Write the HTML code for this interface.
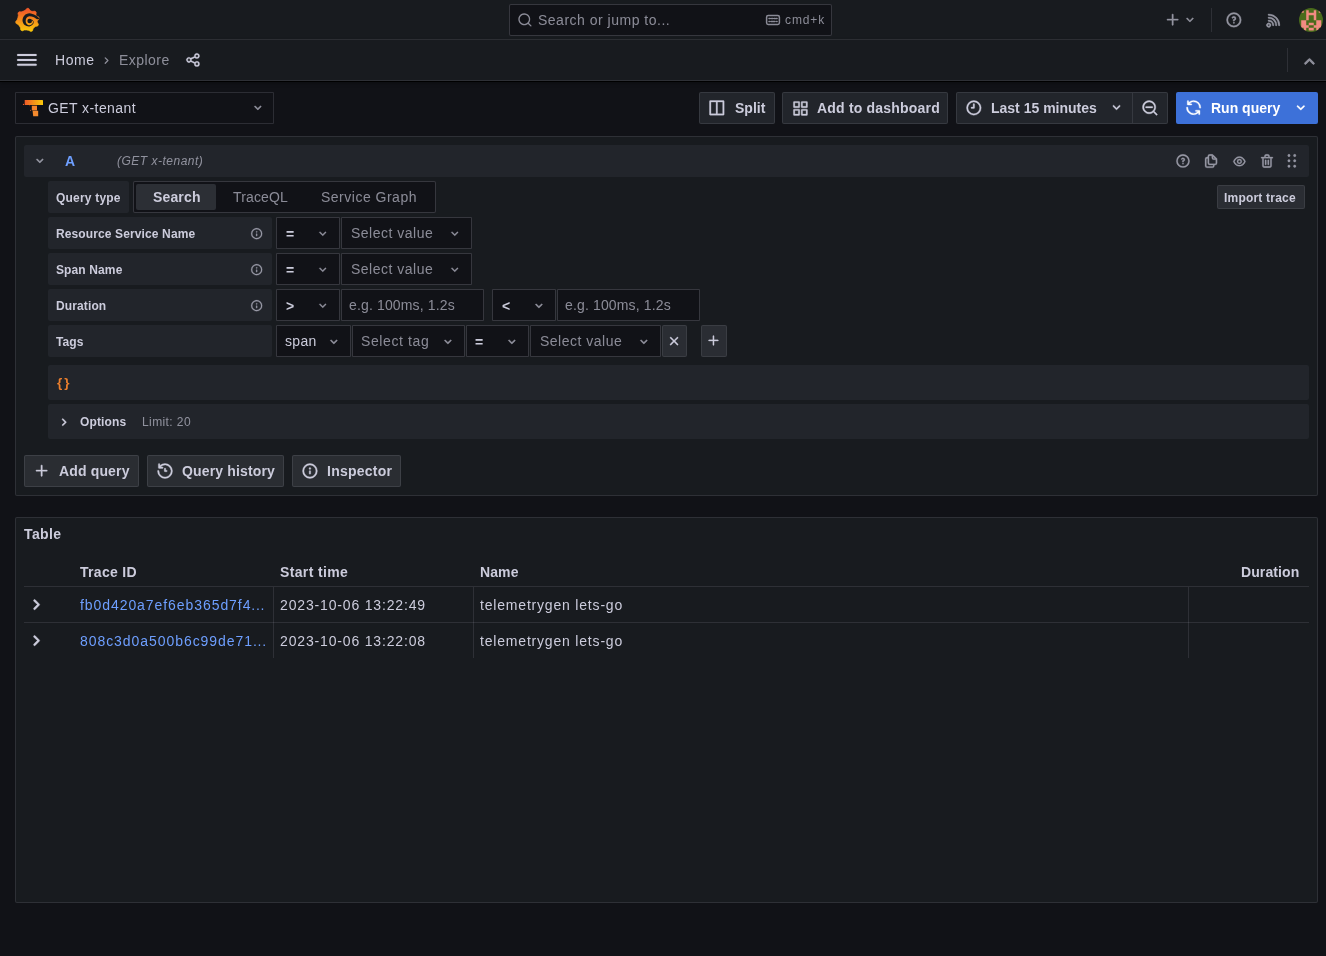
<!DOCTYPE html>
<html><head><meta charset="utf-8">
<style>
*{box-sizing:border-box;margin:0;padding:0}
html,body{width:1326px;height:956px;overflow:hidden;background:#111217;font-family:"Liberation Sans",sans-serif;color:#ccccdc;font-size:14px}
.abs{position:absolute}
svg{position:absolute;display:block;overflow:visible}
.topbar{position:absolute;left:0;top:0;width:1326px;height:40px;background:#181b1f;border-bottom:1px solid rgba(204,204,220,0.12)}
.crumbbar{position:absolute;left:0;top:40px;width:1326px;height:41px;background:#181b1f;border-bottom:1px solid rgba(204,204,220,0.12);box-shadow:0 1px 0 #000,0 2px 4px rgba(0,0,0,0.35)}
.search{position:absolute;left:509px;top:4px;width:323px;height:32px;background:#111217;border:1px solid rgba(204,204,220,0.2);border-radius:2px}
.btn{position:absolute;height:32px;border:1px solid rgba(204,204,220,0.12);background:#22252b;border-radius:2px}
.t{will-change:transform;position:absolute;white-space:nowrap;line-height:14px;height:14px;font-size:14px;letter-spacing:0.35px}
.t12{will-change:transform;position:absolute;white-space:nowrap;line-height:12px;height:12px;font-size:12px;letter-spacing:0.3px}
.b{font-weight:bold;letter-spacing:0.15px}
.sec{color:rgba(204,204,220,0.65)}
.panel{position:absolute;left:15px;width:1303px;background:#181b1f;border:1px solid rgba(204,204,220,0.12);border-radius:2px}
.lbl{position:absolute;left:48px;width:224px;height:32px;background:#22252b;border-radius:2px}
.sel{position:absolute;height:32px;background:#111217;border:1px solid rgba(204,204,220,0.2);border-radius:1px}
.ic{stroke:currentColor;fill:none;stroke-width:1.5;stroke-linecap:round;stroke-linejoin:round}
</style></head><body>

<!-- TOP BAR -->
<div class="topbar"></div>
<svg style="left:16px;top:8px" width="24" height="24" viewBox="0 0 24 24">
  <defs><linearGradient id="gl" x1="0" y1="0" x2="0" y2="1"><stop offset="0.1" stop-color="#f05a28"/><stop offset="1" stop-color="#fbca0a"/></linearGradient></defs>
  <path fill="url(#gl)" stroke="url(#gl)" stroke-width="0.6" stroke-linejoin="round" d="M7.45 3.12 L9.43 2.09 L10.98 0.31 L12.64 0.37 L14.07 2.25 L15.27 3.09 L16.70 3.37 L19.05 3.08 L20.24 4.24 L20.04 6.59 L20.10 7.48 L20.81 8.01 L22.89 9.12 L23.21 10.75 L21.69 12.56 L21.23 13.41 L21.47 14.34 L22.51 16.46 L21.81 17.97 L19.52 18.54 L18.15 19.44 L17.16 20.74 L16.43 22.99 L14.88 23.58 L12.83 22.40 L10.62 22.07 L8.39 22.05 L6.18 22.90 L4.75 22.07 L4.38 19.73 L3.34 17.95 L1.99 16.39 L-0.09 15.28 L-0.41 13.65 L1.11 11.84 L1.84 9.64 L2.31 7.36 L1.90 5.04 L2.99 3.79 L5.35 3.87Z"/>
  <path d="M24.09 10.90 C23.32 10.30 21.23 8.25 19.45 7.32 C17.67 6.39 15.23 5.28 13.40 5.30 C11.57 5.32 9.60 6.27 8.45 7.45 C7.30 8.63 6.45 10.80 6.50 12.40 C6.55 14.00 7.58 16.05 8.73 17.07 C9.88 18.08 12.01 18.66 13.40 18.50 C14.79 18.34 16.38 16.91 17.08 16.08 C17.77 15.25 17.70 14.25 17.55 13.51 C17.41 12.78 16.43 11.96 16.20 11.65 L14.95 11.99 C15.27 12.21 16.62 12.74 16.88 13.33 C17.14 13.92 17.09 14.85 16.51 15.51 C15.93 16.17 14.43 17.31 13.40 17.30 C12.37 17.29 10.98 16.26 10.36 15.44 C9.74 14.62 9.65 13.37 9.70 12.40 C9.75 11.43 10.03 10.33 10.64 9.64 C11.26 8.95 12.28 8.35 13.40 8.25 C14.52 8.15 16.13 8.54 17.38 9.06 C18.64 9.57 20.34 10.96 20.93 11.34Z" fill="#181b1f"/>
  <circle cx="13.7" cy="13" r="2.35" fill="#181b1f"/>
</svg>
<div class="search"></div>
<svg style="left:517.06px;top:12.12px;color:rgba(204,204,220,0.65)" width="15.90" height="15.90" viewBox="0 0 24 24"><path fill="currentColor" stroke="currentColor" stroke-width="0" d="M21.71,20.29,18,16.61A9,9,0,1,0,16.61,18l3.68,3.68a1,1,0,0,0,1.42,0A1,1,0,0,0,21.71,20.29ZM11,18a7,7,0,1,1,7-7A7,7,0,0,1,11,18Z"/></svg>
<div class="t sec" style="left:538px;top:13px;letter-spacing:0.5px">Search or jump to...</div>
<svg style="left:766px;top:15px;color:rgba(204,204,220,0.65)" width="14" height="10" viewBox="0 0 14 10"><rect x="0.6" y="0.6" width="12.8" height="8.8" rx="1.6" class="ic" stroke-width="1.2"/><path d="M3 3.5h1.2M5.5 3.5h1.2M8 3.5h1.2M10.3 3.5h.8M3 6.5h.6M5 6.5h4M10.5 6.5h.6" class="ic" stroke-width="1.1"/></svg>
<div class="t12 sec" style="left:785px;top:14px;letter-spacing:0.9px">cmd+k</div>

<svg style="left:1164.38px;top:11.38px;color:rgba(204,204,220,0.65)" width="17.25" height="17.25" viewBox="0 0 24 24"><path fill="currentColor" stroke="currentColor" stroke-width="0.45" d="M19,11H13V5a1,1,0,0,0-2,0v6H5a1,1,0,0,0,0,2h6v6a1,1,0,0,0,2,0V13h6a1,1,0,0,0,0-2Z"/></svg>
<svg style="left:1182.06px;top:12.23px;color:rgba(204,204,220,0.65)" width="15.84" height="15.84" viewBox="0 0 24 24"><path fill="currentColor" stroke="currentColor" stroke-width="0.45" d="M17,9.17a1,1,0,0,0-1.41,0L12,12.71,8.46,9.17a1,1,0,0,0-1.41,0,1,1,0,0,0,0,1.42l4.24,4.24a1,1,0,0,0,1.420,0L17,10.59A1,1,0,0,0,17,9.17Z"/></svg>
<div class="abs" style="left:1211px;top:8px;width:1px;height:24px;background:rgba(204,204,220,0.12)"></div>
<svg style="left:1225.12px;top:11.02px;color:rgba(204,204,220,0.65)" width="17.76" height="17.76" viewBox="0 0 24 24"><path fill="currentColor" stroke="currentColor" stroke-width="0.45" d="M11.29,15.29a1.58,1.58,0,0,0-.12.15.76.76,0,0,0-.09.18.64.64,0,0,0-.06.18,1.36,1.36,0,0,0,0,.2.84.84,0,0,0,.08.38.9.9,0,0,0,.54.54.94.94,0,0,0,.76,0,.9.9,0,0,0,.54-.54A1,1,0,0,0,13,16a1,1,0,0,0-.29-.71A1,1,0,0,0,11.29,15.29ZM12,2A10,10,0,1,0,22,12,10,10,0,0,0,12,2Zm0,18a8,8,0,1,1,8-8A8,8,0,0,1,12,20ZM12,7A3,3,0,0,0,9.4,8.5a1,1,0,1,0,1.73,1A1,1,0,0,1,12,9a1,1,0,0,1,0,2,1,1,0,0,0-1,1v1a1,1,0,0,0,2,0v-.18A3,3,0,0,0,12,7Z"/></svg>
<svg style="left:1264.84px;top:10.95px;color:rgba(204,204,220,0.65)" width="17.86" height="17.86" viewBox="0 0 24 24"><path fill="currentColor" stroke="currentColor" stroke-width="0.45" d="M2.88,16.88a3,3,0,1,0,4.24,4.24,3,3,0,1,0-4.24-4.24Zm2.83,2.830a1,1,0,0,1-1.42-1.42,1,1,0,0,1,1.420,0A1,1,0,0,1,5.71,19.71ZM5,12a1,1,0,0,0,0,2,5,5,0,0,1,5,5,1,1,0,0,0,2,0,7,7,0,0,0-7-7ZM5,8a1,1,0,0,0,0,2,9,9,0,0,1,9,9,1,1,0,0,0,2,0,11.08,11.08,0,0,0-3.22-7.78A11.08,11.08,0,0,0,5,8Zm10.61.39A14.88,14.88,0,0,0,5,4a1,1,0,0,0,0,2,13,13,0,0,1,13,13,1,1,0,0,0,2,0A14.88,14.88,0,0,0,15.61,8.39Z"/></svg>
<svg style="left:1299px;top:8px" width="24" height="24" viewBox="0 0 24 24">
  <clipPath id="av"><circle cx="12" cy="12" r="12"/></clipPath>
  <g clip-path="url(#av)"><rect width="24" height="24" fill="#4a6b1c"/><path fill="#f28b82" d="M2.20 2.30h2.51v2.51h-2.51zM7.22 2.30h2.51v2.51h-2.51zM14.75 2.30h2.51v2.51h-2.51zM19.77 2.30h2.51v2.51h-2.51zM7.22 4.81h2.51v2.51h-2.51zM9.73 4.81h2.51v2.51h-2.51zM12.24 4.81h2.51v2.51h-2.51zM14.75 4.81h2.51v2.51h-2.51zM7.22 7.32h2.51v2.51h-2.51zM14.75 7.32h2.51v2.51h-2.51zM7.22 9.83h2.51v2.51h-2.51zM14.75 9.83h2.51v2.51h-2.51zM2.20 12.34h2.51v2.51h-2.51zM4.71 12.34h2.51v2.51h-2.51zM17.26 12.34h2.51v2.51h-2.51zM19.77 12.34h2.51v2.51h-2.51zM2.20 14.85h2.51v2.51h-2.51zM4.71 14.85h2.51v2.51h-2.51zM9.73 14.85h2.51v2.51h-2.51zM12.24 14.85h2.51v2.51h-2.51zM17.26 14.85h2.51v2.51h-2.51zM19.77 14.85h2.51v2.51h-2.51zM2.20 17.36h2.51v2.51h-2.51zM4.71 17.36h2.51v2.51h-2.51zM7.22 17.36h2.51v2.51h-2.51zM14.75 17.36h2.51v2.51h-2.51zM17.26 17.36h2.51v2.51h-2.51zM19.77 17.36h2.51v2.51h-2.51zM4.71 19.87h2.51v2.51h-2.51zM9.73 19.87h2.51v2.51h-2.51zM12.24 19.87h2.51v2.51h-2.51zM17.26 19.87h2.51v2.51h-2.51z"/></g>
</svg>

<!-- BREADCRUMB BAR -->
<div class="crumbbar"></div>
<svg style="left:15.10px;top:48.10px;color:#ccccdc" width="23.80" height="23.80" viewBox="0 0 24 24"><path fill="currentColor" stroke="currentColor" stroke-width="0.15" d="M3,8H21a1,1,0,0,0,0-2H3A1,1,0,0,0,3,8Zm18,8H3a1,1,0,0,0,0,2H21a1,1,0,0,0,0-2Zm0-5H3a1,1,0,0,0,0,2H21a1,1,0,0,0,0-2Z"/></svg>
<div class="t" style="left:55px;top:53px;letter-spacing:0.6px">Home</div>
<svg style="left:99.37px;top:53.27px;color:rgba(204,204,220,0.65)" width="15.15" height="15.15" viewBox="0 0 24 24"><path fill="currentColor" stroke="currentColor" stroke-width="0" d="M14.83,11.29,10.59,7.050a1,1,0,0,0-1.42,0,1,1,0,0,0,0,1.41L12.71,12,9.17,15.54a1,1,0,0,0,0,1.41,1,1,0,0,0,.71.3.93.93,0,0,0,.71-.3l4.24-4.24A1,1,0,0,0,14.83,11.29Z"/></svg>
<div class="t sec" style="left:119px;top:53px;letter-spacing:0.45px">Explore</div>
<svg style="left:185.06px;top:52.12px;color:#ccccdc" width="15.88" height="15.88" viewBox="0 0 24 24"><path fill="currentColor" stroke="currentColor" stroke-width="0.45" d="M18,14a4,4,0,0,0-3.08,1.48l-5.1-2.35a3.64,3.640,0,0,0,0-2.26l5.1-2.35A4,4,0,1,0,14,6a4.17,4.17,0,0,0,.07.71L8.79,9.14a4,4,0,1,0,0,5.72l5.28,2.43A4.17,4.17,0,0,0,14,18a4,4,0,1,0,4-4ZM18,4a2,2,0,1,1-2,2A2,2,0,0,1,18,4ZM6,14a2,2,0,1,1,2-2A2,2,0,0,1,6,14Zm12,6a2,2,0,1,1,2-2A2,2,0,0,1,18,20Z"/></svg>
<div class="abs" style="left:1287px;top:48px;width:1px;height:24px;background:rgba(204,204,220,0.12)"></div>
<svg style="left:1297.66px;top:49.77px;color:rgba(204,204,220,0.65)" width="22.86" height="22.86" viewBox="0 0 24 24"><path fill="currentColor" stroke="currentColor" stroke-width="0.45" d="M17,13.41,12.71,9.17a1,1,0,0,0-1.42,0L7.050,13.41a1,1,0,0,0,0,1.42,1,1,0,0,0,1.41,0L12,11.29l3.54,3.54a1,1,0,0,0,.7.29,1,1,0,0,0,.71-.29A1,1,0,0,0,17,13.41Z"/></svg>

<!-- TOOLBAR -->
<div class="sel" style="left:15px;top:92px;width:259px;border-color:rgba(204,204,220,0.15)"></div>
<svg style="left:23px;top:99px" width="20" height="18" viewBox="0 0 20 18">
  <defs><linearGradient id="tg" x1="0" y1="0" x2="1" y2="0"><stop offset="0" stop-color="#f05a28"/><stop offset="1" stop-color="#fbca0a"/></linearGradient></defs>
  <path fill="url(#tg)" d="M1.7 0.9H19.4Q20 0.9 20 1.6V6H1.7Z"/>
  <path fill="#f4832b" d="M8.8 6.7H14V11.4H8.8Z"/>
  <path fill="#f58a2e" d="M9.6 11.8H15.2V17.3H10.2Z"/>
  <circle cx="0.5" cy="5.4" r="0.6" fill="#f05a28"/><circle cx="7.5" cy="11.3" r="0.5" fill="#e8662a"/><circle cx="6.4" cy="6.8" r="0.4" fill="#c8561f"/>
</svg>
<div class="t" style="left:48px;top:101px;letter-spacing:0.42px">GET x-tenant</div>
<svg style="left:250.21px;top:100.02px;color:rgba(204,204,220,0.65)" width="15.65" height="15.65" viewBox="0 0 24 24"><path fill="currentColor" stroke="currentColor" stroke-width="0.45" d="M17,9.17a1,1,0,0,0-1.41,0L12,12.71,8.46,9.17a1,1,0,0,0-1.41,0,1,1,0,0,0,0,1.42l4.24,4.24a1,1,0,0,0,1.420,0L17,10.59A1,1,0,0,0,17,9.17Z"/></svg>

<div class="btn" style="left:699px;top:92px;width:76px"></div>
<svg style="left:708.18px;top:99.08px;color:#ccccdc" width="17.64" height="17.64" viewBox="0 0 24 24"><path fill="currentColor" stroke="currentColor" stroke-width="0.45" d="M21,2H3A1,1,0,0,0,2,3V21a1,1,0,0,0,1,1H21a1,1,0,0,0,1-1V3A1,1,0,0,0,21,2ZM11,20H4V4h7Zm9,0H13V4h7Z"/></svg>
<div class="t b" style="left:735px;top:101px;letter-spacing:0">Split</div>

<div class="btn" style="left:782px;top:92px;width:166px"></div>
<svg style="left:791.54px;top:99.74px;color:#ccccdc" width="16.92" height="16.92" viewBox="0 0 24 24"><path fill="currentColor" stroke="currentColor" stroke-width="0.45" d="M10,13H3a1,1,0,0,0-1,1v7a1,1,0,0,0,1,1h7a1,1,0,0,0,1-1V14A1,1,0,0,0,10,13ZM9,20H4V15H9ZM21,2H14a1,1,0,0,0-1,1v7a1,1,0,0,0,1,1h7a1,1,0,0,0,1-1V3A1,1,0,0,0,21,2ZM20,9H15V4h5Zm1,4H14a1,1,0,0,0-1,1v7a1,1,0,0,0,1,1h7a1,1,0,0,0,1-1V14A1,1,0,0,0,21,13Zm-1,7H15V15h5ZM10,2H3A1,1,0,0,0,2,3v7a1,1,0,0,0,1,1h7a1,1,0,0,0,1-1V3A1,1,0,0,0,10,2ZM9,9H4V4H9Z"/></svg>
<div class="t b" style="left:817px;top:101px;letter-spacing:0.2px">Add to dashboard</div>

<div class="btn" style="left:956px;top:92px;width:212px"></div>
<div class="abs" style="left:1132px;top:93px;width:1px;height:30px;background:rgba(204,204,220,0.12)"></div>
<svg style="left:965.00px;top:98.85px;color:#ccccdc" width="17.70" height="17.70" viewBox="0 0 24 24"><path fill="currentColor" stroke="currentColor" stroke-width="0.45" d="M12,2A10,10,0,1,0,22,12,10.011,10.011,0,0,0,12,2Zm0,18a8,8,0,1,1,8-8A8.009,8.009,0,0,1,12,20ZM12,6a1,1,0,0,0-1,1v4H9a1,1,0,0,0,0,2h3a1,1,0,0,0,1-1V7A1,1,0,0,0,12,6Z"/></svg>
<div class="t b" style="left:991px;top:101px;letter-spacing:0">Last 15 minutes</div>
<svg style="left:1107.62px;top:99.13px;color:#ccccdc" width="17.03" height="17.03" viewBox="0 0 24 24"><path fill="currentColor" stroke="currentColor" stroke-width="0.45" d="M17,9.17a1,1,0,0,0-1.41,0L12,12.71,8.46,9.17a1,1,0,0,0-1.41,0,1,1,0,0,0,0,1.42l4.24,4.24a1,1,0,0,0,1.420,0L17,10.59A1,1,0,0,0,17,9.17Z"/></svg>
<svg style="left:1141.00px;top:98.76px;color:#ccccdc" width="17.82" height="17.82" viewBox="0 0 24 24"><path fill="currentColor" stroke="currentColor" stroke-width="0.45" d="M21.71,20.29,18,16.61A9,9,0,1,0,16.61,18l3.68,3.68a1,1,0,0,0,1.42,0A1,1,0,0,0,21.71,20.29ZM11,18a7,7,0,1,1,7-7A7,7,0,0,1,11,18Zm4-8H7a1,1,0,0,0,0,2h8a1,1,0,0,0,0-2Z"/></svg>

<div class="abs" style="left:1176px;top:92px;width:142px;height:32px;background:#3d71d9;border-radius:2px"></div>
<svg style="left:1185.44px;top:99.29px;color:#fff" width="17.22" height="17.22" viewBox="0 0 24 24"><path fill="currentColor" stroke="currentColor" stroke-width="0.45" d="M19.91,15.51H15.38a1,1,0,0,0,0,2h2.4A8,8,0,0,1,4,12a1,1,0,0,0-2,0,10,10,0,0,0,16.88,7.23V21a1,1,0,0,0,2,0V16.5A1,1,0,0,0,19.91,15.51ZM12,2A10,10,0,0,0,5.12,4.77V3a1,1,0,0,0-2,0V7.5a1,1,0,0,0,1,1h4.5a1,1,0,0,0,0-2H6.22A8,8,0,0,1,20,12a1,1,0,0,0,2,0A10,10,0,0,0,12,2Z"/></svg>
<div class="t b" style="left:1211px;top:101px;color:#fff;letter-spacing:0">Run query</div>
<svg style="left:1292.20px;top:98.81px;color:#fff" width="17.57" height="17.57" viewBox="0 0 24 24"><path fill="currentColor" stroke="currentColor" stroke-width="0.45" d="M17,9.17a1,1,0,0,0-1.41,0L12,12.71,8.46,9.17a1,1,0,0,0-1.41,0,1,1,0,0,0,0,1.42l4.24,4.24a1,1,0,0,0,1.420,0L17,10.59A1,1,0,0,0,17,9.17Z"/></svg>

<!-- QUERY PANEL -->
<div class="panel" style="top:136px;height:360px"></div>
<div class="abs" style="left:24px;top:145px;width:1285px;height:32px;background:#22252b;border-radius:2px"></div>
<svg style="left:32.21px;top:153.32px;color:rgba(204,204,220,0.65)" width="15.65" height="15.65" viewBox="0 0 24 24"><path fill="currentColor" stroke="currentColor" stroke-width="0.45" d="M17,9.17a1,1,0,0,0-1.41,0L12,12.71,8.46,9.17a1,1,0,0,0-1.41,0,1,1,0,0,0,0,1.42l4.24,4.24a1,1,0,0,0,1.420,0L17,10.59A1,1,0,0,0,17,9.17Z"/></svg>
<div class="t b" style="left:65px;top:154px;color:#6e9fff">A</div>
<div class="t12 sec" style="left:117px;top:155px;font-style:italic;letter-spacing:0.5px">(GET x-tenant)</div>
<svg style="left:1175.02px;top:153.12px;color:rgba(204,204,220,0.65)" width="15.96" height="15.96" viewBox="0 0 24 24"><path fill="currentColor" stroke="currentColor" stroke-width="0.45" d="M11.29,15.29a1.58,1.58,0,0,0-.12.15.76.76,0,0,0-.09.18.64.64,0,0,0-.06.18,1.36,1.36,0,0,0,0,.2.84.84,0,0,0,.08.38.9.9,0,0,0,.54.54.94.94,0,0,0,.76,0,.9.9,0,0,0,.54-.54A1,1,0,0,0,13,16a1,1,0,0,0-.29-.71A1,1,0,0,0,11.29,15.29ZM12,2A10,10,0,1,0,22,12,10,10,0,0,0,12,2Zm0,18a8,8,0,1,1,8-8A8,8,0,0,1,12,20ZM12,7A3,3,0,0,0,9.4,8.5a1,1,0,1,0,1.73,1A1,1,0,0,1,12,9a1,1,0,0,1,0,2,1,1,0,0,0-1,1v1a1,1,0,0,0,2,0v-.18A3,3,0,0,0,12,7Z"/></svg>
<svg style="left:1202.92px;top:152.82px;color:rgba(204,204,220,0.65)" width="16.17" height="16.17" viewBox="0 0 24 24"><path fill="currentColor" stroke="currentColor" stroke-width="0.45" d="M21,8.94a1.31,1.31,0,0,0-.06-.27l0-.09a1.07,1.07,0,0,0-.19-.28h0l-6-6h0a1.07,1.07,0,0,0-.28-.19.32.32,0,0,0-.09,0A.88.88,0,0,0,14.05,2H10A3,3,0,0,0,7,5V6H6A3,3,0,0,0,3,9V19a3,3,0,0,0,3,3h8a3,3,0,0,0,3-3V18h1a3,3,0,0,0,3-3V9S21,9,21,8.94ZM15,5.41,17.59,8H16a1,1,0,0,1-1-1ZM15,19a1,1,0,0,1-1,1H6a1,1,0,0,1-1-1V9A1,1,0,0,1,6,8H7v7a3,3,0,0,0,3,3h5Zm4-4a1,1,0,0,1-1,1H10a1,1,0,0,1-1-1V5a1,1,0,0,1,1-1h3V7a3,3,0,0,0,3,3h3Z"/></svg>
<svg style="left:1231.74px;top:153.74px;color:rgba(204,204,220,0.65)" width="14.82" height="14.82" viewBox="0 0 24 24"><path fill="currentColor" stroke="currentColor" stroke-width="0.45" d="M21.92,11.6C19.9,6.91,16.1,4,12,4S4.1,6.91,2.08,11.6a1,1,0,0,0,0,.8C4.1,17.09,7.9,20,12,20s7.9-2.91,9.92-7.6A1,1,0,0,0,21.92,11.6ZM12,18c-3.17,0-6.17-2.29-7.9-6C5.83,8.290,8.83,6,12,6s6.17,2.29,7.9,6C18.17,15.71,15.17,18,12,18ZM12,8a4,4,0,1,0,4,4A4,4,0,0,0,12,8Zm0,6a2,2,0,1,1,2-2A2,2,0,0,1,12,14Z"/></svg>
<svg style="left:1258.87px;top:152.92px;color:rgba(204,204,220,0.65)" width="15.97" height="15.97" viewBox="0 0 24 24"><path fill="currentColor" stroke="currentColor" stroke-width="0.45" d="M10,18a1,1,0,0,0,1-1V11a1,1,0,0,0-2,0v6A1,1,0,0,0,10,18ZM20,6H16V5a3,3,0,0,0-3-3H11A3,3,0,0,0,8,5V6H4A1,1,0,0,0,4,8H5V19a3,3,0,0,0,3,3h8a3,3,0,0,0,3-3V8h1a1,1,0,0,0,0-2ZM10,5a1,1,0,0,1,1-1h2a1,1,0,0,1,1,1V6H10Zm7,14a1,1,0,0,1-1,1H8a1,1,0,0,1-1-1V8H17Zm-3-1a1,1,0,0,0,1-1V11a1,1,0,0,0-2,0v6A1,1,0,0,0,14,18Z"/></svg>
<svg style="left:1282.22px;top:151.27px;color:rgba(204,204,220,0.65)" width="19.67" height="19.67" viewBox="0 0 24 24"><path fill="currentColor" stroke="currentColor" stroke-width="0.45" d="M8.5 7a1.5 1.5 0 1 0 0-3 1.5 1.5 0 0 0 0 3zm0 6.5a1.5 1.5 0 1 0 0-3 1.5 1.5 0 0 0 0 3zm1.5 5a1.5 1.5 0 1 1-3 0 1.5 1.5 0 0 1 3 0zM15.5 7a1.5 1.5 0 1 0 0-3 1.5 1.5 0 0 0 0 3zm1.5 5a1.5 1.5 0 1 1-3 0 1.5 1.5 0 0 1 3 0zm-1.5 8a1.5 1.5 0 1 0 0-3 1.5 1.5 0 0 0 0 3z"/></svg>

<div class="abs" style="left:1217px;top:185px;width:88px;height:24px;background:#2a2d33;border:1px solid rgba(204,204,220,0.1);border-radius:2px"></div>
<div class="t12 b" style="left:1224px;top:192px;letter-spacing:0.2px">Import trace</div>

<!-- Query type -->
<div class="lbl" style="top:181px;width:81px"></div>
<div class="t12 b" style="left:56px;top:192px;letter-spacing:0.2px">Query type</div>
<div class="abs" style="left:133px;top:181px;width:303px;height:32px;background:#111217;border:1px solid rgba(204,204,220,0.2);border-radius:2px"></div>
<div class="abs" style="left:136px;top:184px;width:80px;height:26px;background:#2c2f35;border-radius:2px"></div>
<div class="t b" style="left:153px;top:190px">Search</div>
<div class="t sec" style="left:233px;top:190px;letter-spacing:0.15px">TraceQL</div>
<div class="t sec" style="left:321px;top:190px;letter-spacing:0.5px">Service Graph</div>

<!-- Rows -->
<div class="lbl" style="top:217px"></div>
<div class="t12 b" style="left:56px;top:228px;letter-spacing:0.12px">Resource Service Name</div>
<div class="lbl" style="top:253px"></div>
<div class="t12 b" style="left:56px;top:264px;letter-spacing:0.12px">Span Name</div>
<div class="lbl" style="top:289px"></div>
<div class="t12 b" style="left:56px;top:300px;letter-spacing:0.12px">Duration</div>
<div class="lbl" style="top:325px"></div>
<div class="t12 b" style="left:56px;top:336px;letter-spacing:0.12px">Tags</div>

<svg style="left:250.34px;top:226.74px;color:rgba(204,204,220,0.65)" width="13.32" height="13.32" viewBox="0 0 24 24"><path fill="currentColor" stroke="currentColor" stroke-width="0.45" d="M12,2A10,10,0,1,0,22,12,10,10,0,0,0,12,2Zm0,18a8,8,0,1,1,8-8A8,8,0,0,1,12,20Zm0-8.5a1,1,0,0,0-1,1v3a1,1,0,0,0,2,0v-3A1,1,0,0,0,12,11.5Zm0-4a1.25,1.25,0,1,0,1.25,1.25A1.25,1.25,0,0,0,12,7.5Z"/></svg>
<svg style="left:250.34px;top:262.74px;color:rgba(204,204,220,0.65)" width="13.32" height="13.32" viewBox="0 0 24 24"><path fill="currentColor" stroke="currentColor" stroke-width="0.45" d="M12,2A10,10,0,1,0,22,12,10,10,0,0,0,12,2Zm0,18a8,8,0,1,1,8-8A8,8,0,0,1,12,20Zm0-8.5a1,1,0,0,0-1,1v3a1,1,0,0,0,2,0v-3A1,1,0,0,0,12,11.5Zm0-4a1.25,1.25,0,1,0,1.25,1.25A1.25,1.25,0,0,0,12,7.5Z"/></svg>
<svg style="left:250.34px;top:298.74px;color:rgba(204,204,220,0.65)" width="13.32" height="13.32" viewBox="0 0 24 24"><path fill="currentColor" stroke="currentColor" stroke-width="0.45" d="M12,2A10,10,0,1,0,22,12,10,10,0,0,0,12,2Zm0,18a8,8,0,1,1,8-8A8,8,0,0,1,12,20Zm0-8.5a1,1,0,0,0-1,1v3a1,1,0,0,0,2,0v-3A1,1,0,0,0,12,11.5Zm0-4a1.25,1.25,0,1,0,1.25,1.25A1.25,1.25,0,0,0,12,7.5Z"/></svg>

<!-- RSN selects -->
<div class="sel" style="left:276px;top:217px;width:64px"></div>
<div class="t b" style="left:286px;top:227px">=</div>
<svg style="left:315.35px;top:226.21px;color:rgba(204,204,220,0.65)" width="15.47" height="15.47" viewBox="0 0 24 24"><path fill="currentColor" stroke="currentColor" stroke-width="0.45" d="M17,9.17a1,1,0,0,0-1.41,0L12,12.71,8.46,9.17a1,1,0,0,0-1.41,0,1,1,0,0,0,0,1.42l4.24,4.24a1,1,0,0,0,1.420,0L17,10.59A1,1,0,0,0,17,9.17Z"/></svg>
<div class="sel" style="left:341px;top:217px;width:131px"></div>
<div class="t sec" style="left:351px;top:226px;letter-spacing:0.5px">Select value</div>
<svg style="left:447.45px;top:226.21px;color:rgba(204,204,220,0.65)" width="15.47" height="15.47" viewBox="0 0 24 24"><path fill="currentColor" stroke="currentColor" stroke-width="0.45" d="M17,9.17a1,1,0,0,0-1.41,0L12,12.71,8.46,9.17a1,1,0,0,0-1.41,0,1,1,0,0,0,0,1.42l4.24,4.24a1,1,0,0,0,1.420,0L17,10.59A1,1,0,0,0,17,9.17Z"/></svg>

<!-- Span name selects -->
<div class="sel" style="left:276px;top:253px;width:64px"></div>
<div class="t b" style="left:286px;top:263px">=</div>
<svg style="left:315.35px;top:262.21px;color:rgba(204,204,220,0.65)" width="15.47" height="15.47" viewBox="0 0 24 24"><path fill="currentColor" stroke="currentColor" stroke-width="0.45" d="M17,9.17a1,1,0,0,0-1.41,0L12,12.71,8.46,9.17a1,1,0,0,0-1.41,0,1,1,0,0,0,0,1.42l4.24,4.24a1,1,0,0,0,1.420,0L17,10.59A1,1,0,0,0,17,9.17Z"/></svg>
<div class="sel" style="left:341px;top:253px;width:131px"></div>
<div class="t sec" style="left:351px;top:262px;letter-spacing:0.5px">Select value</div>
<svg style="left:447.45px;top:262.21px;color:rgba(204,204,220,0.65)" width="15.47" height="15.47" viewBox="0 0 24 24"><path fill="currentColor" stroke="currentColor" stroke-width="0.45" d="M17,9.17a1,1,0,0,0-1.41,0L12,12.71,8.46,9.17a1,1,0,0,0-1.41,0,1,1,0,0,0,0,1.42l4.24,4.24a1,1,0,0,0,1.420,0L17,10.59A1,1,0,0,0,17,9.17Z"/></svg>

<!-- Duration -->
<div class="sel" style="left:276px;top:289px;width:64px"></div>
<div class="t b" style="left:286px;top:299px">&gt;</div>
<svg style="left:315.35px;top:298.21px;color:rgba(204,204,220,0.65)" width="15.47" height="15.47" viewBox="0 0 24 24"><path fill="currentColor" stroke="currentColor" stroke-width="0.45" d="M17,9.17a1,1,0,0,0-1.41,0L12,12.71,8.46,9.17a1,1,0,0,0-1.41,0,1,1,0,0,0,0,1.42l4.24,4.24a1,1,0,0,0,1.420,0L17,10.59A1,1,0,0,0,17,9.17Z"/></svg>
<div class="sel" style="left:341px;top:289px;width:143px"></div>
<div class="t sec" style="left:349px;top:298px;letter-spacing:0.15px">e.g. 100ms, 1.2s</div>
<div class="sel" style="left:492px;top:289px;width:64px"></div>
<div class="t b" style="left:502px;top:299px">&lt;</div>
<svg style="left:530.93px;top:298.04px;color:rgba(204,204,220,0.65)" width="15.81" height="15.81" viewBox="0 0 24 24"><path fill="currentColor" stroke="currentColor" stroke-width="0.45" d="M17,9.17a1,1,0,0,0-1.41,0L12,12.71,8.46,9.17a1,1,0,0,0-1.41,0,1,1,0,0,0,0,1.42l4.24,4.24a1,1,0,0,0,1.420,0L17,10.59A1,1,0,0,0,17,9.17Z"/></svg>
<div class="sel" style="left:557px;top:289px;width:143px"></div>
<div class="t sec" style="left:565px;top:298px;letter-spacing:0.15px">e.g. 100ms, 1.2s</div>

<!-- Tags -->
<div class="sel" style="left:276px;top:325px;width:75px"></div>
<div class="t" style="left:285px;top:334px;letter-spacing:0.3px">span</div>
<svg style="left:326.14px;top:334.10px;color:rgba(204,204,220,0.65)" width="15.70" height="15.70" viewBox="0 0 24 24"><path fill="currentColor" stroke="currentColor" stroke-width="0.45" d="M17,9.17a1,1,0,0,0-1.41,0L12,12.71,8.46,9.17a1,1,0,0,0-1.41,0,1,1,0,0,0,0,1.42l4.24,4.24a1,1,0,0,0,1.420,0L17,10.59A1,1,0,0,0,17,9.17Z"/></svg>
<div class="sel" style="left:352px;top:325px;width:113px"></div>
<div class="t sec" style="left:361px;top:334px;letter-spacing:0.6px">Select tag</div>
<svg style="left:440.23px;top:334.04px;color:rgba(204,204,220,0.65)" width="15.81" height="15.81" viewBox="0 0 24 24"><path fill="currentColor" stroke="currentColor" stroke-width="0.45" d="M17,9.17a1,1,0,0,0-1.41,0L12,12.71,8.46,9.17a1,1,0,0,0-1.41,0,1,1,0,0,0,0,1.42l4.24,4.24a1,1,0,0,0,1.420,0L17,10.59A1,1,0,0,0,17,9.17Z"/></svg>
<div class="sel" style="left:466px;top:325px;width:63px"></div>
<div class="t b" style="left:475px;top:335px">=</div>
<svg style="left:504.14px;top:334.10px;color:rgba(204,204,220,0.65)" width="15.70" height="15.70" viewBox="0 0 24 24"><path fill="currentColor" stroke="currentColor" stroke-width="0.45" d="M17,9.17a1,1,0,0,0-1.41,0L12,12.71,8.46,9.17a1,1,0,0,0-1.41,0,1,1,0,0,0,0,1.42l4.24,4.24a1,1,0,0,0,1.420,0L17,10.59A1,1,0,0,0,17,9.17Z"/></svg>
<div class="sel" style="left:530px;top:325px;width:131px"></div>
<div class="t sec" style="left:540px;top:334px;letter-spacing:0.5px">Select value</div>
<svg style="left:636.24px;top:334.10px;color:rgba(204,204,220,0.65)" width="15.70" height="15.70" viewBox="0 0 24 24"><path fill="currentColor" stroke="currentColor" stroke-width="0.45" d="M17,9.17a1,1,0,0,0-1.41,0L12,12.71,8.46,9.17a1,1,0,0,0-1.41,0,1,1,0,0,0,0,1.42l4.24,4.24a1,1,0,0,0,1.420,0L17,10.59A1,1,0,0,0,17,9.17Z"/></svg>
<div class="abs" style="left:662px;top:325px;width:25px;height:32px;background:#2a2d33;border:1px solid rgba(204,204,220,0.1);border-radius:2px"></div>
<svg style="left:665.86px;top:332.86px;color:#ccccdc" width="16.19" height="16.19" viewBox="0 0 24 24"><path fill="currentColor" stroke="currentColor" stroke-width="0.45" d="M13.41,12l4.3-4.29a1,1,0,1,0-1.42-1.42L12,10.59,7.71,6.29A1,1,0,0,0,6.29,7.71L10.59,12l-4.3,4.29a1,1,0,0,0,0,1.42,1,1,0,0,0,1.42,0L12,13.41l4.29,4.3a1,1,0,0,0,1.42,0,1,1,0,0,0,0-1.42Z"/></svg>
<div class="abs" style="left:701px;top:325px;width:26px;height:32px;background:#2a2d33;border:1px solid rgba(204,204,220,0.1);border-radius:2px"></div>
<svg style="left:706.49px;top:333.44px;color:#ccccdc" width="14.93" height="14.93" viewBox="0 0 24 24"><path fill="currentColor" stroke="currentColor" stroke-width="0.45" d="M19,11H13V5a1,1,0,0,0-2,0v6H5a1,1,0,0,0,0,2h6v6a1,1,0,0,0,2,0V13h6a1,1,0,0,0,0-2Z"/></svg>

<!-- braces -->
<div class="abs" style="left:48px;top:365px;width:1261px;height:35px;background:#22252b;border-radius:2px"></div>
<div class="abs" style="will-change:transform;left:57px;top:376px;font-family:'Liberation Sans',sans-serif;font-weight:bold;font-size:13.5px;line-height:14px;color:#ec7f2d;letter-spacing:2px">{}</div>

<!-- options -->
<div class="abs" style="left:48px;top:404px;width:1261px;height:35px;background:#22252b;border-radius:2px"></div>
<svg style="left:55.74px;top:413.69px;color:#ccccdc" width="16.41" height="16.41" viewBox="0 0 24 24"><path fill="currentColor" stroke="currentColor" stroke-width="0.45" d="M14.83,11.29,10.59,7.050a1,1,0,0,0-1.42,0,1,1,0,0,0,0,1.41L12.71,12,9.17,15.54a1,1,0,0,0,0,1.41,1,1,0,0,0,.71.3.93.93,0,0,0,.71-.3l4.24-4.24A1,1,0,0,0,14.83,11.29Z"/></svg>
<div class="t12 b" style="left:80px;top:416px">Options</div>
<div class="t12 sec" style="left:142px;top:416px;letter-spacing:0.4px">Limit: 20</div>

<!-- buttons -->
<div class="btn" style="left:24px;top:455px;width:115px;background:#2a2d32"></div>
<svg style="left:33.23px;top:462.33px;color:#ccccdc" width="17.25" height="17.25" viewBox="0 0 24 24"><path fill="currentColor" stroke="currentColor" stroke-width="0.45" d="M19,11H13V5a1,1,0,0,0-2,0v6H5a1,1,0,0,0,0,2h6v6a1,1,0,0,0,2,0V13h6a1,1,0,0,0,0-2Z"/></svg>
<div class="t b" style="left:59px;top:464px">Add query</div>
<div class="btn" style="left:147px;top:455px;width:137px;background:#2a2d32"></div>
<svg style="left:155.95px;top:461.85px;color:#ccccdc" width="18.00" height="18.00" viewBox="0 0 24 24"><path fill="currentColor" stroke="currentColor" stroke-width="0.45" d="M12,2A10,10,0,0,0,5.12,4.77V3a1,1,0,0,0-2,0V7.5a1,1,0,0,0,1,1H8.62a1,1,0,0,0,0-2H6.22A8,8,0,1,1,4,12a1,1,0,0,0-2,0A10,10,0,1,0,12,2Zm0,6a1,1,0,0,0-1,1v3a1,1,0,0,0,1,1h2a1,1,0,0,0,0-2H13V9A1,1,0,0,0,12,8Z"/></svg>
<div class="t b" style="left:182px;top:464px">Query history</div>
<div class="btn" style="left:292px;top:455px;width:109px;background:#2a2d32"></div>
<svg style="left:300.96px;top:461.86px;color:#ccccdc" width="17.88" height="17.88" viewBox="0 0 24 24"><path fill="currentColor" stroke="currentColor" stroke-width="0.45" d="M12,2A10,10,0,1,0,22,12,10,10,0,0,0,12,2Zm0,18a8,8,0,1,1,8-8A8,8,0,0,1,12,20Zm0-8.5a1,1,0,0,0-1,1v3a1,1,0,0,0,2,0v-3A1,1,0,0,0,12,11.5Zm0-4a1.25,1.25,0,1,0,1.25,1.25A1.25,1.25,0,0,0,12,7.5Z"/></svg>
<div class="t b" style="left:327px;top:464px;letter-spacing:0.25px">Inspector</div>

<!-- TABLE PANEL -->
<div class="panel" style="top:517px;height:386px"></div>
<div class="t b" style="left:24px;top:527px;letter-spacing:0.4px">Table</div>

<div class="t b" style="left:80px;top:565px;letter-spacing:0.3px">Trace ID</div>
<div class="t b" style="left:280px;top:565px;letter-spacing:0.35px">Start time</div>
<div class="t b" style="left:480px;top:565px;letter-spacing:0.1px">Name</div>
<div class="t b" style="left:1241px;top:565px;letter-spacing:0.1px">Duration</div>
<div class="abs" style="left:24px;top:586px;width:1285px;height:1px;background:rgba(204,204,220,0.12)"></div>
<div class="abs" style="left:24px;top:622px;width:1285px;height:1px;background:rgba(204,204,220,0.12)"></div>
<div class="abs" style="left:273px;top:587px;width:1px;height:71px;background:rgba(204,204,220,0.12)"></div>
<div class="abs" style="left:473px;top:587px;width:1px;height:71px;background:rgba(204,204,220,0.12)"></div>
<div class="abs" style="left:1188px;top:587px;width:1px;height:71px;background:rgba(204,204,220,0.12)"></div>

<svg style="left:24.60px;top:593.00px;color:#ccccdc" width="23.19" height="23.19" viewBox="0 0 24 24"><path fill="currentColor" stroke="currentColor" stroke-width="0.45" d="M14.83,11.29,10.59,7.050a1,1,0,0,0-1.42,0,1,1,0,0,0,0,1.41L12.71,12,9.17,15.54a1,1,0,0,0,0,1.41,1,1,0,0,0,.71.3.93.93,0,0,0,.71-.3l4.24-4.24A1,1,0,0,0,14.83,11.29Z"/></svg>
<div class="t" style="left:80px;top:598px;color:#6e9fff;letter-spacing:0.93px">fb0d420a7ef6eb365d7f4<span style="letter-spacing:0.7px">...</span></div>
<div class="t" style="left:280px;top:598px;letter-spacing:0.84px">2023-10-06 13:22:49</div>
<div class="t" style="left:480px;top:598px;letter-spacing:0.81px">telemetrygen lets-go</div>

<svg style="left:24.60px;top:629.00px;color:#ccccdc" width="23.19" height="23.19" viewBox="0 0 24 24"><path fill="currentColor" stroke="currentColor" stroke-width="0.45" d="M14.83,11.29,10.59,7.050a1,1,0,0,0-1.42,0,1,1,0,0,0,0,1.41L12.71,12,9.17,15.54a1,1,0,0,0,0,1.41,1,1,0,0,0,.71.3.93.93,0,0,0,.71-.3l4.24-4.24A1,1,0,0,0,14.83,11.29Z"/></svg>
<div class="t" style="left:80px;top:634px;color:#6e9fff;letter-spacing:0.94px">808c3d0a500b6c99de71<span style="letter-spacing:0.7px">...</span></div>
<div class="t" style="left:280px;top:634px;letter-spacing:0.84px">2023-10-06 13:22:08</div>
<div class="t" style="left:480px;top:634px;letter-spacing:0.81px">telemetrygen lets-go</div>

</body></html>
